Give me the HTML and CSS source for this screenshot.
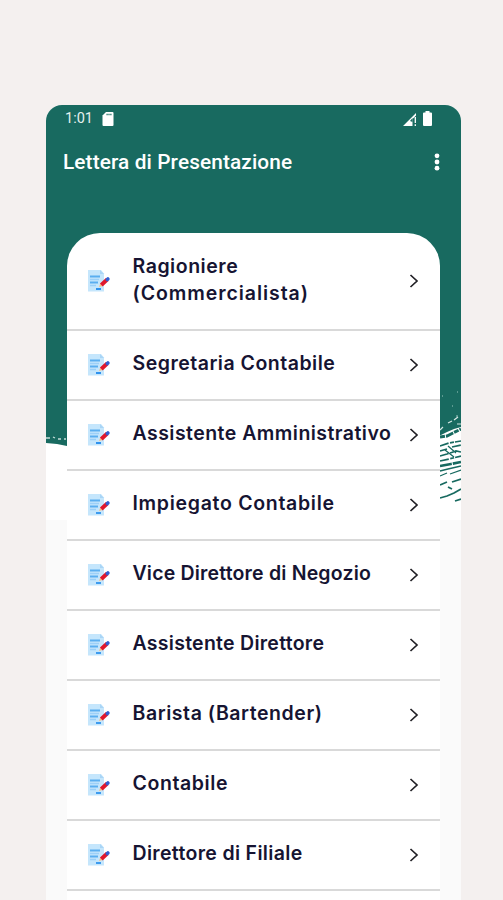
FILE: index.html
```
<!DOCTYPE html>
<html lang="it">
<head>
<meta charset="utf-8">
<title>Lettera di Presentazione</title>
<link rel="stylesheet" href="styles.css">
</head>
<body>
<svg class="defs" aria-hidden="true">
  <symbol id="note" viewBox="0 0 24 24">
    <path d="M1 1H14L17 4.500V22.500H1Z" fill="#c5e6fc"/>
    <path d="M13 1V5H17Z" fill="#a9d5f6"/>
    <path d="M3 7.500H13M3 13.500H11" stroke="#5aaef0" stroke-width="2"/>
    <path d="M3 10.500H12M3 16.500H9" stroke="#9cd0f8" stroke-width="1.400"/>
    <path d="M9 20H14" stroke="#2f92ee" stroke-width="1.800"/>
    <path d="M12 18L13.200 14.700L15.300 17Z" fill="#ffbd79"/>
    <path d="M14.300 15.900L20.200 10.600" stroke="#e0182d" stroke-width="4"/>
    <path d="M20.300 10.500L20.900 9.900" stroke="#315fd2" stroke-width="3.600" stroke-linecap="round"/>
  </symbol>
  <symbol id="chevron" viewBox="0 0 10 16">
    <path d="M1.500 2L8 8L1.500 14" fill="none" stroke="#222126" stroke-width="1.700"/>
  </symbol>
</svg>
<main class="phone">
  <svg class="paint" viewBox="1 0 415 415" aria-hidden="true">
    <path d="M0 0H416V415H0Z" fill="#fff"/>
    <path d="M0 0H416V325L394 331V341H22L12 339L0 338Z" fill="#186a60"/>
    <path d="M1 333H5M8 332L10 333M13 334H16M19 334H21" stroke="#c5ded9" stroke-width="1.300"/>
    <path d="M397 291h1M412 287h1M407 301h1M411 311h2" stroke="#9cc8c0"/>
    <path d="M395 325L398 322M403 318L407 316M409 315L413 312M412 319H416" fill="none" stroke="#d5e8e4" stroke-width="1.200"/>
    <path d="M394 331L402 327L409 324L416 322V415H394Z" fill="#fff"/>
    <g fill="none" stroke="#186a60">
      <path d="M395 332L402 331L408 328L416 324" stroke-width="3" stroke-dasharray="5 1 8 1"/>
      <path d="M395 341L404 338L416 336M395 346L402 344M407 342L416 340M395 351L402 349L411 346L416 347M395 356L404 354L416 351" stroke-width="1.700" stroke-dasharray="9 1.500 4 1"/>
      <path d="M395 361L406 359L416 357" stroke-width="2.600" stroke-dasharray="12 1"/>
      <path d="M395 366L403 364L416 361M400 345L409 352M403 341L411 348" stroke-width="1.300"/>
      <path d="M395 371L402 368M405 369L416 365" stroke-width="1.200"/>
      <path d="M395 380L402 377M407 377L416 374M403 382L407 384M395 393L402 391L409 388L416 384M410 396L416 394" stroke-width="1.800"/>
    </g>
  </svg>
  <header class="top">
    <div class="status">
      <span class="clock">1:01</span>
      <svg class="sd" viewBox="0 0 12 14"><path d="M4 0H10.500Q11.500 0 11.500 1V13Q11.500 14 10.500 14H1.500Q.5 14 .5 13V3.500Z" fill="#fff"/><path d="M4.500 2.500H9.500" stroke="#186a60" stroke-width="1.500" stroke-dasharray="1.200 .7"/></svg>
      <svg class="signal" viewBox="0 0 14 14"><path d="M0 14L13 1V3.500L9.500 7V14Z" fill="#fff"/><path d="M7 9L9.500 6V10Z" fill="#186a60"/><path d="M12.300 5V11M12.300 12.300V14" stroke="#fff" stroke-width="1.300"/></svg>
      <svg class="battery" viewBox="0 0 9 15"><path d="M2.500 0H6.500V1.500H8Q9 1.500 9 2.500V14Q9 15 8 15H1Q0 15 0 14V2.500Q0 1.500 1 1.500H2.500Z" fill="#fff"/></svg>
    </div>
    <div class="appbar">
      <h1>Lettera di Presentazione</h1>
      <svg class="more" viewBox="0 0 6 18"><g fill="#fff"><circle cx="3" cy="2.800" r="2.400"/><circle cx="3" cy="9" r="2.400"/><circle cx="3" cy="15.200" r="2.400"/></g></svg>
    </div>
  </header>
  <ul class="list">
    <li class="row tall"><svg class="note"><use href="#note"/></svg><span class="label"><span class="w1">Ragioniere</span><br><span class="w2">(Commercialista)</span></span><svg class="chevron"><use href="#chevron"/></svg></li>
    <li class="row"><svg class="note"><use href="#note"/></svg><span class="label w3">Segretaria Contabile</span><svg class="chevron"><use href="#chevron"/></svg></li>
    <li class="row"><svg class="note"><use href="#note"/></svg><span class="label w4">Assistente Amministrativo</span><svg class="chevron"><use href="#chevron"/></svg></li>
    <li class="row"><svg class="note"><use href="#note"/></svg><span class="label w5">Impiegato Contabile</span><svg class="chevron"><use href="#chevron"/></svg></li>
    <li class="row"><svg class="note"><use href="#note"/></svg><span class="label w6">Vice Direttore di Negozio</span><svg class="chevron"><use href="#chevron"/></svg></li>
    <li class="row"><svg class="note"><use href="#note"/></svg><span class="label w7">Assistente Direttore</span><svg class="chevron"><use href="#chevron"/></svg></li>
    <li class="row"><svg class="note"><use href="#note"/></svg><span class="label w8">Barista (Bartender)</span><svg class="chevron"><use href="#chevron"/></svg></li>
    <li class="row"><svg class="note"><use href="#note"/></svg><span class="label w9">Contabile</span><svg class="chevron"><use href="#chevron"/></svg></li>
    <li class="row"><svg class="note"><use href="#note"/></svg><span class="label w10">Direttore di Filiale</span><svg class="chevron"><use href="#chevron"/></svg></li>
  </ul>
</main>
</body>
</html>
```
FILE: styles.css
```
* { box-sizing: border-box; }
body { margin: 0; height: 900px; overflow: hidden; padding: 105px 42px 0 46px; background: #f4f0ef; }
.defs { position: absolute; width: 0; height: 0; }
.phone { position: relative; height: 795px; overflow: hidden; border-radius: 16px 16px 0 0; background: #fafafa; }
.paint { position: absolute; left: 0; top: 0; width: 415px; height: 415px; }
.top { position: relative; height: 128px; color: #fff; font-family: Roboto, sans-serif; }
.status { display: flex; align-items: center; height: 27px; padding: 0 29px 0 19px; }
.clock { width: 37px; font-size: 14.5px; color: #e5f0ee; }
.sd { width: 12px; height: 14px; }
.signal { width: 14px; height: 14px; margin-left: auto; margin-right: 6px; }
.battery { width: 9px; height: 15px; }
.appbar { display: flex; align-items: center; justify-content: space-between; height: 60px; padding: 0 21px 0 17px; }
h1 { margin: 0; font-size: 20.8px; font-weight: 500; letter-spacing: .12px; white-space: nowrap; }
.more { width: 6px; height: 18px; }
.list { position: relative; height: 667px; margin: 0 21px; padding: 0; list-style: none; background: #fff; border-radius: 33px 33px 0 0; overflow: hidden; }
.row { display: flex; align-items: center; height: 70px; padding: 0 21px; border-bottom: 2px solid #d9d9d9; }
.tall { height: 98px; }
.note { width: 24px; height: 24px; flex: none; margin: -1px 1px 0 -1px; }
.label { flex: 1; margin: -3px 0 0 20.500px; font: 600 19.5px/27px Inter, sans-serif; color: #161432; white-space: nowrap; }
.chevron { width: 10px; height: 16px; flex: none; margin-top: -1px; }
.w1 { letter-spacing: .53px; }
.w2 { letter-spacing: .93px; }
.w3 { letter-spacing: .5px; }
.w4 { letter-spacing: .46px; }
.w5 { letter-spacing: .7px; }
.w6 { letter-spacing: .18px; }
.w7 { letter-spacing: .27px; }
.w8 { letter-spacing: .56px; }
.w9 { letter-spacing: .6px; }
.w10 { letter-spacing: .33px; }
```
